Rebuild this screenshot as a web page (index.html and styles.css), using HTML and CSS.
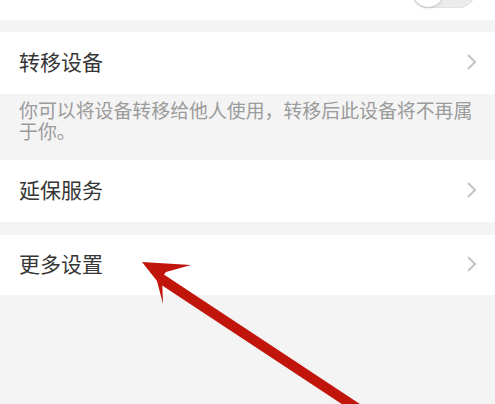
FILE: index.html
```html
<!DOCTYPE html>
<html lang="zh">
<head>
<meta charset="utf-8">
<link rel="stylesheet" href="styles.css">
</head>
<body>
<div class="page">
  <div class="top">
    <div class="toggle"><div class="knob"></div></div>
  </div>
  <div class="gap g1"></div>
  <div class="row r1">
    <span class="label">转移设备</span>
    <svg class="chev" viewBox="0 0 12 18" width="12" height="18"><path d="M2 2 L9 9 L2 16" fill="none" stroke="#c4c4c4" stroke-width="2"/></svg>
  </div>
  <div class="desc">你可以将设备转移给他人使用，转移后此设备将不再属于你。</div>
  <div class="row r2">
    <span class="label">延保服务</span>
    <svg class="chev" viewBox="0 0 12 18" width="12" height="18"><path d="M2 2 L9 9 L2 16" fill="none" stroke="#c4c4c4" stroke-width="2"/></svg>
  </div>
  <div class="gap g2"></div>
  <div class="row r3">
    <span class="label">更多设置</span>
    <svg class="chev" viewBox="0 0 12 18" width="12" height="18"><path d="M2 2 L9 9 L2 16" fill="none" stroke="#c4c4c4" stroke-width="2"/></svg>
  </div>
  <svg class="arrow" viewBox="0 0 495 404" width="495" height="404">
    <line x1="160" y1="278" x2="372" y2="418" stroke="#c1150c" stroke-width="10"/>
    <polygon points="142,262 191,265 166,272 162,277 163,304 157,281" fill="#c1150c"/>
  </svg>
</div>
</body>
</html>
```
FILE: styles.css
```css
html, body {
  margin: 0;
  padding: 0;
}
body {
  background: #f4f4f4;
  font-family: "Noto Sans CJK SC", "Noto Sans", sans-serif;
}
.page {
  position: relative;
  width: 495px;
  height: 404px;
  overflow: hidden;
  background: #f4f4f4;
}
.top {
  height: 20px;
  background: #fff;
  display: flex;
  justify-content: flex-end;
  align-items: flex-end;
  overflow: hidden;
  padding-right: 20px;
  box-sizing: border-box;
}
.toggle {
  width: 63px;
  height: 32px;
  margin-bottom: 12px;
  border-radius: 16px;
  background: #ececec;
  position: relative;
  box-shadow: inset 0 0 0 1px #e2e2e2;
}
.knob {
  position: absolute;
  left: 1px;
  top: 1px;
  width: 30px;
  height: 30px;
  border-radius: 50%;
  background: #fff;
  box-shadow: 0 1px 3px rgba(0,0,0,0.18);
}
.gap.g1 { height: 12px; }
.gap.g2 { height: 13px; }
.row {
  background: #fff;
  display: flex;
  align-items: center;
  justify-content: space-between;
  padding: 0 17px 0 19px;
}
.r1 { height: 62px; }
.r2 { height: 62px; }
.r3 { height: 60px; }
.label {
  font-size: 21px;
  color: #363636;
  line-height: 1;
  padding-bottom: 4px;
}
.chev {
  display: block;
  padding-bottom: 2px;
}
.desc {
  padding: 5px 18px 18px 19px;
  height: 66px;
  box-sizing: border-box;
  font-size: 18.9px;
  line-height: 21px;
  color: #9b9b9b;
}
.arrow {
  position: absolute;
  left: 0;
  top: 0;
  pointer-events: none;
}
```
